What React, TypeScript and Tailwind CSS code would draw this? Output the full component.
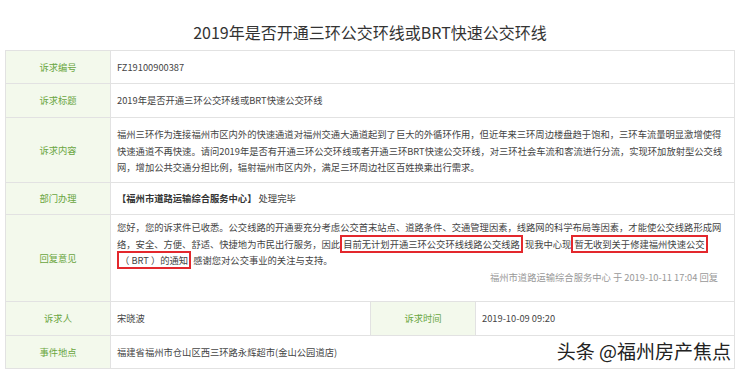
const font = "font-['Microsoft_YaHei','Noto_Sans_CJK_SC',sans-serif]"

function Label({ children, className = '' }: { children: React.ReactNode; className?: string }) {
  return (
    <div
      className={`w-[105px] shrink-0 bg-[#f3f9ec] text-[#6aa63f] flex items-center justify-center border-r border-[#e2e2e2] ${className}`}
    >
      {children}
    </div>
  )
}

function Boxed({ children }: { children: React.ReactNode }) {
  return <span className="border-2 border-[#e3282d] px-[1px]">{children}</span>
}

export default function App() {
  return (
    <div className={`w-[740px] h-[370px] bg-white relative overflow-hidden ${font}`}>
      <h1 className="h-[50px] flex items-end justify-center pb-[7px] text-[16px] leading-[22px] text-[#333]">
        2019年是否开通三环公交环线或BRT快速公交环线
      </h1>

      <div className="mx-[5px] border border-[#e2e2e2] text-[9.3px] leading-[16.5px] text-[#444]">
        <div className="flex h-[33px] border-b border-[#e2e2e2]">
          <Label>诉求编号</Label>
          <div className="flex items-center px-[6px]">FZ19100900387</div>
        </div>

        <div className="flex h-[34px] border-b border-[#e2e2e2]">
          <Label>诉求标题</Label>
          <div className="flex items-center px-[6px]">2019年是否开通三环公交环线或BRT快速公交环线</div>
        </div>

        <div className="flex h-[65px] border-b border-[#e2e2e2]">
          <Label>诉求内容</Label>
          <div className="px-[6px] pt-[8px] whitespace-nowrap">
            <div>福州三环作为连接福州市区内外的快速通道对福州交通大通道起到了巨大的外循环作用，但近年来三环周边楼盘趋于饱和，三环车流量明显激增使得</div>
            <div>快速通道不再快速。请问2019年是否有开通三环公交环线或者开通三环BRT快速公交环线，对三环社会车流和客流进行分流，实现环加放射型公交线</div>
            <div>网，增加公共交通分担比例，辐射福州市区内外，满足三环周边社区百姓换乘出行需求。</div>
          </div>
        </div>

        <div className="flex h-[32px] border-b border-[#e2e2e2]">
          <Label>部门办理</Label>
          <div className="flex items-center px-[6px]">
            <span className="font-bold text-[#333]">【福州市道路运输综合服务中心】</span>
            <span>&nbsp;处理完毕</span>
          </div>
        </div>

        <div className="flex h-[87px] border-b border-[#e2e2e2]">
          <Label>回复意见</Label>
          <div className="flex-1 pl-[6px] pt-[4px] whitespace-nowrap">
            <div>您好，您的诉求件已收悉。公交线路的开通要充分考虑公交首末站点、道路条件、交通管理因素，线路网的科学布局等因素，才能使公交线路形成网</div>
            <div>
              络，安全、方便、舒适、快捷地为市民出行服务，因此<Boxed>目前无计划开通三环公交环线线路公交线路</Boxed> 现我中心现<Boxed>暂无收到关于修建福州快速公交</Boxed>
            </div>
            <div>
              <Boxed>（ BRT ）的通知</Boxed> 感谢您对公交事业的关注与支持。
            </div>
            <div className="text-right pr-[16px] text-[#999]">福州市道路运输综合服务中心 于 2019-10-11 17:04 回复</div>
          </div>
        </div>

        <div className="flex h-[34px] border-b border-[#e2e2e2]">
          <Label>诉求人</Label>
          <div className="w-[260px] flex items-center px-[6px] border-r border-[#e2e2e2]">宋晓波</div>
          <Label className="w-[104px]">诉求时间</Label>
          <div className="flex items-center px-[6px]">2019-10-09 09:20</div>
        </div>

        <div className="flex h-[32px]">
          <Label>事件地点</Label>
          <div className="flex items-center px-[6px]">福建省福州市仓山区西三环路永辉超市(金山公园道店)</div>
        </div>
      </div>

      <div className="absolute right-[9px] bottom-[7px] text-[19px] leading-[24px] text-[#222]">
        头条 @福州房产焦点
      </div>
    </div>
  )
}
